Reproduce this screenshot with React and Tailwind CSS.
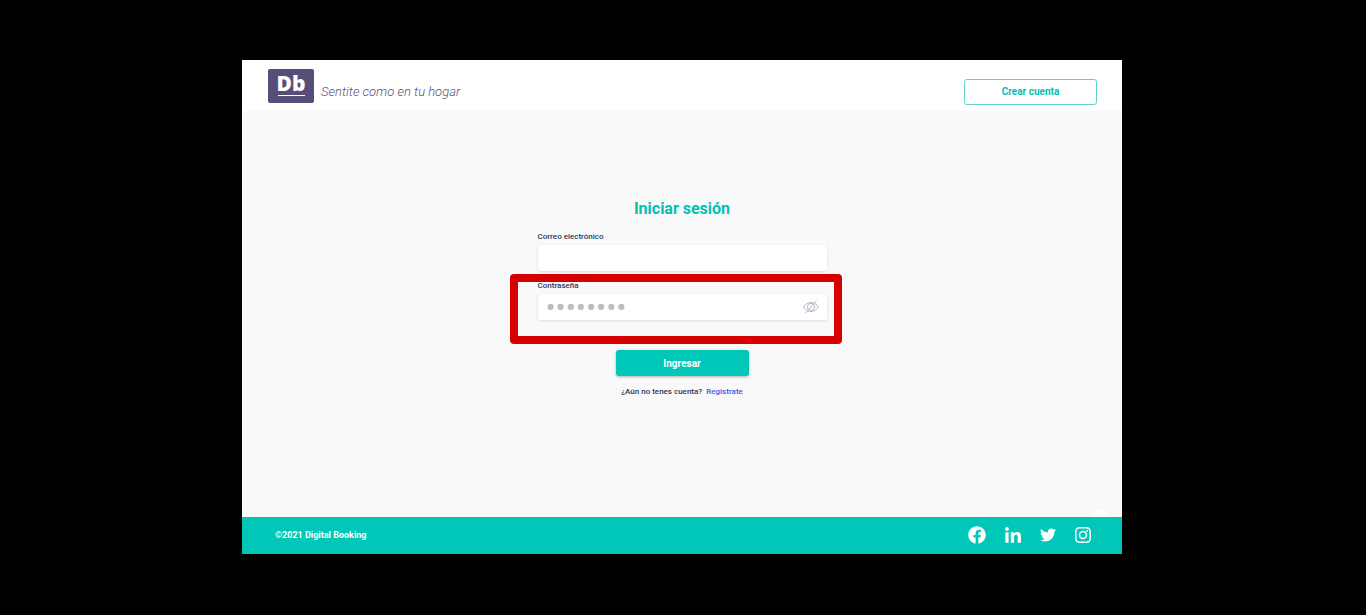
import { FaFacebook, FaTwitter } from "react-icons/fa";

function Logo() {
  return (
    <a href="#inicio" aria-label="Digital Booking" className="flex h-[34px] w-[46px] flex-col items-center rounded-xs bg-[#564d78] text-white">
      <span className="h-[26px] font-['Open_Sans',sans-serif] text-[21px] leading-[29px] font-extrabold">Db</span>
      <span className="h-px w-[27px] bg-white" />
    </a>
  );
}

function EyeOff() {
  return (
    <svg viewBox="0 0 16 14" className="h-[14px] w-4" fill="none" stroke="#a9b3c3" strokeWidth="0.9" strokeLinecap="round">
      <path d="M0.700 7C2.500 4 5 2.500 8 2.500S13.500 4 15.300 7C13.500 10 11 11.500 8 11.500S2.500 10 0.700 7Z" />
      <circle cx="8" cy="7" r="3.600" />
      <path d="M13.300 0.800L2.300 13.200" />
    </svg>
  );
}

function LinkedIn() {
  return (
    <svg viewBox="0 0 16 16" className="size-4" fill="currentColor">
      <circle cx="2" cy="2" r="1.900" />
      <path d="M0.400 5.300h3.200V15.700H0.400zM5.800 5.300h3.100v1.400c.6-1 1.700-1.700 3.100-1.700 3 0 4 1.900 4 4.700v6h-3.300v-5.300c0-1.500-.2-2.700-1.700-2.700-1.600 0-1.900 1.200-1.900 2.600v5.400H5.800z" />
    </svg>
  );
}

function Instagram() {
  return (
    <svg viewBox="0 0 16 16" className="size-4" fill="none" stroke="currentColor" strokeWidth="1.500">
      <rect x="0.800" y="0.800" width="14.400" height="14.400" rx="3.600" />
      <circle cx="8" cy="8" r="3.500" />
      <circle cx="12.200" cy="3.800" r="1" fill="currentColor" stroke="none" />
    </svg>
  );
}

const labelClass = "text-[8px] leading-[13px] font-medium text-[#33365c]";

export default function App() {
  return (
    <div className="flex min-h-screen flex-col bg-black pt-[60px] pr-[244px] pb-[61px] pl-[242px] font-['Roboto',sans-serif]">
      <div className="flex flex-1 flex-col bg-[#f9f9f9]">
        <header className="flex h-[51px] items-center justify-between bg-white pr-[25px] pl-[26px]">
          <div className="flex items-center gap-[7px]">
            <Logo />
            <p className="pt-3 text-[13px] leading-5 font-light text-[#545776] italic">Sentite como en tu hogar</p>
          </div>
          <button type="button" className="mt-3 h-[26px] w-[133px] rounded-[3px] border border-[#5fd3c8] text-[10px] font-bold text-[#00bfb2]">
            Crear cuenta
          </button>
        </header>

        <main className="relative flex flex-1 flex-col items-center pt-[86px]">
          <form className="flex w-[289px] flex-col items-center">
            <h1 className="h-6 text-base leading-6 font-bold text-[#00c1b4]">Iniciar sesión</h1>
            <div className="mt-[9px] flex w-full flex-col gap-[2px]">
              <label htmlFor="correo" className={labelClass}>Correo electrónico</label>
              <input id="correo" type="email" className="h-[26px] w-full rounded-[3px] bg-white px-2 text-xs shadow-[0_1px_3px_rgba(0,0,0,0.12)] outline-none" />
            </div>
            <div className="relative mt-2 flex w-full flex-col gap-[2px]">
              <label htmlFor="clave" className={labelClass}>Contraseña</label>
              <div className="flex h-[26px] items-center rounded-[3px] bg-white px-2 shadow-[0_1px_3px_rgba(0,0,0,0.12)]">
                <input id="clave" type="password" defaultValue="12345678" className="h-[26px] min-w-0 flex-1 bg-transparent text-[30px] leading-[26px] text-[#bdbdbd] outline-none" />
                <button type="button" aria-label="Mostrar contraseña"><EyeOff /></button>
              </div>
              <div className="pointer-events-none absolute -top-[5px] -right-[15px] -left-7 h-[70px] rounded-sm border-8 border-[#d50000]" />
            </div>
            <button type="submit" className="mt-[30px] h-[26px] w-[133px] rounded-[3px] bg-[#00c7b8] text-[10px] font-bold text-white shadow-[0_1px_3px_rgba(0,0,0,0.3)]">
              Ingresar
            </button>
            <p className="mt-[9px] flex gap-1 text-[8px] leading-[13px] font-medium text-[#33365c]">
              ¿Aún no tenes cuenta? <a href="#registro" className="text-[#4b55f0]">Registrate</a>
            </p>
          </form>
          <svg viewBox="0 0 18 7" className="absolute right-3 bottom-0 h-[7px] w-[18px]" fill="#ffffff">
            <path d="M0 7Q3 0 9 0T18 7Z" />
          </svg>
        </main>

        <footer className="flex h-[37px] items-center justify-between bg-[#00c7b8] pr-[31px] pb-0.5 pl-[33px] text-white">
          <p className="text-[9px] leading-3 font-bold">©2021 Digital Booking</p>
          <nav className="flex items-center gap-[19px]">
            <a href="#facebook" aria-label="Facebook"><FaFacebook className="size-[18px]" /></a>
            <a href="#linkedin" aria-label="LinkedIn"><LinkedIn /></a>
            <a href="#twitter" aria-label="Twitter"><FaTwitter className="size-4" /></a>
            <a href="#instagram" aria-label="Instagram"><Instagram /></a>
          </nav>
        </footer>
      </div>
    </div>
  );
}
